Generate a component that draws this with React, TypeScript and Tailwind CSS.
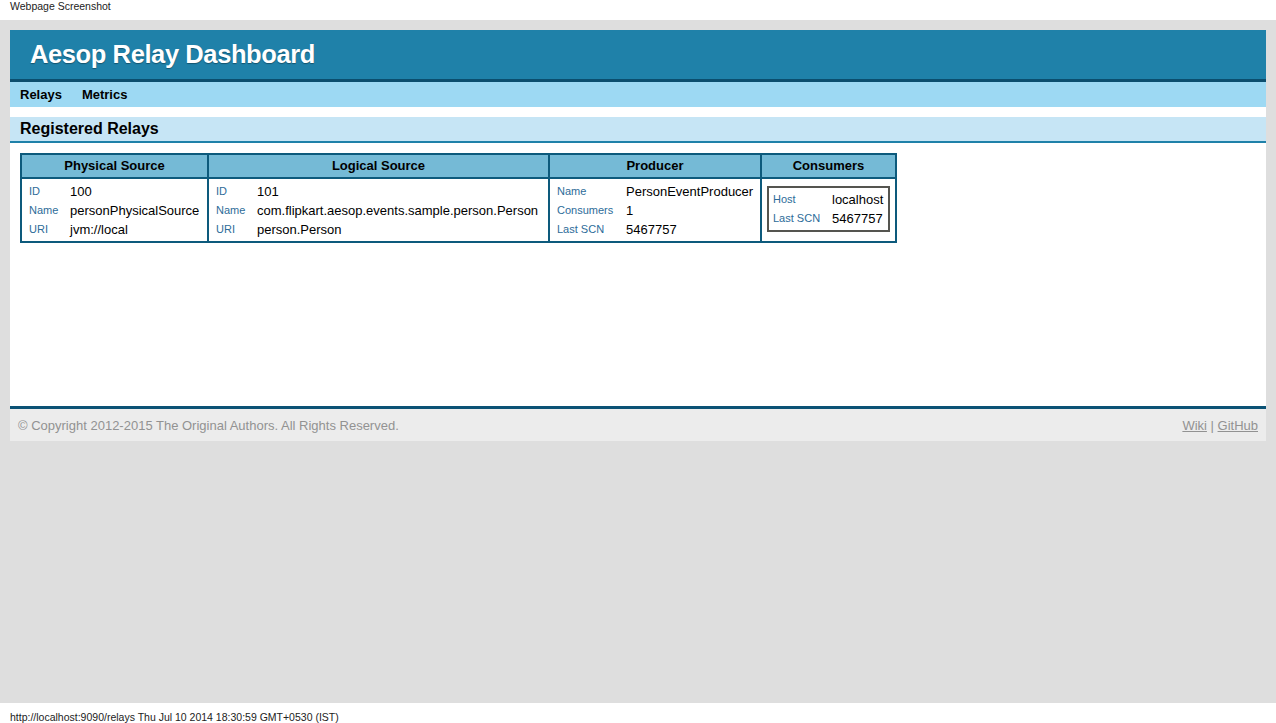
const producer = [
  ['Name', 'PersonEventProducer'],
  ['Consumers', '1'],
  ['Last SCN', '5467757'],
];

function Rows({ rows, labelW }: { rows: string[][]; labelW: string }) {
  return (
    <table className="border-collapse">
      <tbody>
        {rows.map(([k, v]) => (
          <tr key={k} className="h-[19px]">
            <td className={`${labelW} text-[11px] leading-[13px] text-[#2d6c99] align-middle`}>{k}</td>
            <td className="text-[13px] leading-[15px] text-black whitespace-nowrap align-middle">{v}</td>
          </tr>
        ))}
      </tbody>
    </table>
  );
}

export default function App() {
  return (
    <div className="w-[1276px] h-[723px] bg-white font-['Liberation_Sans',Arial,sans-serif] text-black overflow-hidden">
      <div className="h-[20px] px-[10px] pt-[1px] text-[10.5px] leading-[10px] text-[#222]">Webpage Screenshot</div>

      <div className="h-[683px] bg-[#dedede] px-[10px] pt-[10px]">
        <div className="bg-white">
          <div className="h-[52px] bg-[#1f81a9] border-b-[3px] border-[#0b4e6e] pl-[20px] flex items-center">
            <h1 className="text-[25.5px] font-bold text-white tracking-[-0.4px] [text-shadow:0_1px_1px_rgba(0,0,0,0.35)]">
              Aesop Relay Dashboard
            </h1>
          </div>
          <div className="h-[25px] bg-[#9dd9f3] flex items-center gap-[20px] px-[10px] text-[13px] font-bold">
            <span>Relays</span>
            <span>Metrics</span>
          </div>
          <div className="h-[10px]" />
          <div className="h-[26px] bg-[#c6e5f5] border-b-2 border-[#1f81a9] flex items-center px-[10px]">
            <h2 className="text-[16px] font-bold">Registered Relays</h2>
          </div>

          <div className="h-[263px] px-[10px] pt-[10px]">
            <table className="border-collapse border-2 border-[#0d5a7c]">
              <thead>
                <tr className="h-[24px] bg-[#75bad6] text-[13px] font-bold">
                  <th className="w-[187px] border-2 border-[#0d5a7c] text-center">Physical Source</th>
                  <th className="w-[341px] border-2 border-[#0d5a7c] text-center">Logical Source</th>
                  <th className="w-[212px] border-2 border-[#0d5a7c] text-center">Producer</th>
                  <th className="w-[135px] border-2 border-[#0d5a7c] text-center">Consumers</th>
                </tr>
              </thead>
              <tbody>
                <tr className="h-[64px]">
                  <td className="border-2 border-[#0d5a7c] px-[7px] align-middle">
                    <Rows
                      labelW="w-[41px]"
                      rows={[
                        ['ID', '100'],
                        ['Name', 'personPhysicalSource'],
                        ['URI', 'jvm://local'],
                      ]}
                    />
                  </td>
                  <td className="border-2 border-[#0d5a7c] pl-[7px] pr-[5px] align-middle">
                    <Rows
                      labelW="w-[41px]"
                      rows={[
                        ['ID', '101'],
                        ['Name', 'com.flipkart.aesop.events.sample.person.Person'],
                        ['URI', 'person.Person'],
                      ]}
                    />
                  </td>
                  <td className="border-2 border-[#0d5a7c] pl-[7px] pr-[5px] align-middle">
                    <Rows labelW="w-[69px]" rows={producer} />
                  </td>
                  <td className="border-2 border-[#0d5a7c] pl-[5px] pr-[3px] align-middle">
                    <div className="border-2 border-[#555550] px-[4px] py-[2px] w-[123px] -mt-[2px]">
                      <Rows
                        labelW="w-[59px]"
                        rows={[
                          ['Host', 'localhost'],
                          ['Last SCN', '5467757'],
                        ]}
                      />
                    </div>
                  </td>
                </tr>
              </tbody>
            </table>
          </div>

          <div className="h-[35px] bg-[#ececec] border-t-[3px] border-[#0b5275] flex items-center justify-between pl-[8px] pr-[8px] pt-[1px] text-[13px] text-[#929292]">
            <span>© Copyright 2012-2015 The Original Authors. All Rights Reserved.</span>
            <span>
              <a className="underline text-[#929292]">Wiki</a> | <a className="underline text-[#929292]">GitHub</a>
            </span>
          </div>
        </div>
      </div>

      <div className="h-[20px] px-[10px] pt-[9px] text-[10.5px] leading-[10px] text-[#222]">
        http://localhost:9090/relays Thu Jul 10 2014 18:30:59 GMT+0530 (IST)
      </div>
    </div>
  );
}
